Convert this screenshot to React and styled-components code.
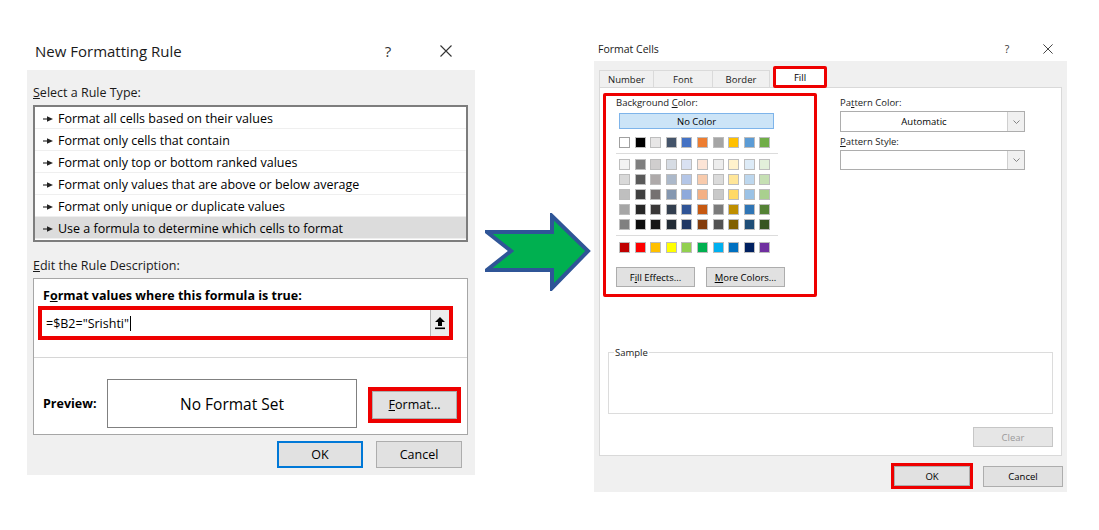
import React from "react";
import styled, { createGlobalStyle } from "styled-components";

const GlobalStyle = createGlobalStyle`
  body {
    margin: 0;
    background: #fff;
    font-family: "Open Sans", "Noto Sans", sans-serif;
    color: #000;
  }
`;

const Page = styled.div`
  display: flex;
  align-items: flex-start;
  width: 1099px;
  height: 530px;
  padding-left: 27px;
  box-sizing: border-box;
  overflow: hidden;
`;

const Dialog = styled.div`
  flex-shrink: 0;
  width: ${(p) => p.$w}px;
  margin-top: ${(p) => p.$top}px;
  margin-left: ${(p) => p.$left || 0}px;
  background: #fff;
`;

const TitleBar = styled.div`
  display: flex;
  align-items: center;
  height: ${(p) => p.$h}px;
  padding-left: ${(p) => p.$pad}px;
  padding-right: ${(p) => p.$padRight}px;
  font-size: ${(p) => p.$size}px;
  color: #1a1a1a;
`;

const TitleText = styled.span`
  flex: 1;
`;

const TitleControl = styled.span`
  display: flex;
  align-items: center;
  justify-content: center;
  width: ${(p) => p.$w}px;
  margin-left: ${(p) => p.$gap || 0}px;
  color: #333;
`;

const Body = styled.div`
  background: #f0f0f0;
  padding: ${(p) => p.$pad};
`;

const SectionLabel = styled.div`
  font-size: 12.5px;
  line-height: 16px;
  margin-top: ${(p) => p.$mt || 0}px;
  margin-bottom: ${(p) => p.$mb || 0}px;
  padding-top: 1px;
  color: #1a1a1a;
`;

const RuleList = styled.div`
  height: 137px;
  box-sizing: border-box;
  border: 2px solid #7d7d7d;
  background: #fff;
`;

const RuleItem = styled.div`
  display: flex;
  align-items: center;
  gap: 5px;
  height: 22px;
  box-sizing: border-box;
  padding: 2px 0 0 8px;
  font-size: 12.5px;
  border-bottom: 1px solid #efefef;
  background: ${(p) => (p.$selected ? "#dcdcdc" : "#fff")};
`;

const DescBox = styled.div`
  height: 157px;
  box-sizing: border-box;
  border: 1px solid #a6a6a6;
  background: #fff;
`;

const BoldLabel = styled.div`
  font-size: 12.5px;
  font-weight: 700;
  line-height: 16px;
  padding-left: ${(p) => p.$pl || 0}px;
  padding-top: ${(p) => p.$pt || 0}px;
  width: ${(p) => (p.$w ? `${p.$w}px` : "auto")};
  flex-shrink: 0;
`;

const Highlight = styled.div`
  display: flex;
  align-items: stretch;
  flex-shrink: 0;
  box-sizing: border-box;
  width: ${(p) => p.$w}px;
  height: ${(p) => p.$h}px;
  border: ${(p) => p.$bw}px solid #ee0000;
  margin: ${(p) => p.$m || 0};
  background: #fff;
  position: relative;
  z-index: 1;
`;

const FormulaInput = styled.div`
  flex: 1;
  display: flex;
  align-items: center;
  padding-left: 4px;
  font-size: 12.5px;
  background: #fff;
`;

const Caret = styled.span`
  display: inline-block;
  width: 1px;
  height: 15px;
  margin-left: 1px;
  background: #000;
`;

const RefButton = styled.div`
  width: 18px;
  display: flex;
  align-items: center;
  justify-content: center;
  background: #ececec;
  border-left: 1px solid #b5b5b5;
`;

const Divider = styled.div`
  height: 1px;
  margin-top: 17px;
  background: #d6d6d6;
`;

const PreviewRow = styled.div`
  display: flex;
  align-items: center;
  margin-top: 21px;
  padding-left: 9px;
`;

const PreviewBox = styled.div`
  width: 250px;
  height: 49px;
  box-sizing: border-box;
  border: 1px solid #808080;
  display: flex;
  align-items: center;
  justify-content: center;
  font-size: 15.5px;
`;

const Button = styled.div`
  flex-shrink: 0;
  display: flex;
  align-items: center;
  justify-content: center;
  box-sizing: border-box;
  width: ${(p) => (p.$w ? `${p.$w}px` : "100%")};
  height: ${(p) => (p.$h ? `${p.$h}px` : "100%")};
  margin-left: ${(p) => p.$ml || 0}px;
  font-size: ${(p) => p.$size}px;
  background: ${(p) => (p.$disabled ? "#e6e6e6" : "#e1e1e1")};
  color: ${(p) => (p.$disabled ? "#9a9a9a" : "#000")};
  border: ${(p) =>
    p.$primary ? "2px solid #0078d7" : p.$disabled ? "1px solid #c6c6c6" : "1px solid #adadad"};
  flex: ${(p) => (p.$fill ? 1 : "none")};
`;

const Footer = styled.div`
  display: flex;
  justify-content: flex-end;
  align-items: center;
  margin-top: ${(p) => p.$mt}px;
  margin-right: ${(p) => p.$mr}px;
  gap: ${(p) => p.$gap}px;
`;

const ArrowWrap = styled.div`
  flex-shrink: 0;
  margin-left: 10px;
  margin-top: 213px;
  width: 106px;
  height: 78px;
`;

/* Format Cells */

const TabStrip = styled.div`
  display: flex;
  align-items: flex-end;
  height: 17px;
`;

const Tab = styled.div`
  display: flex;
  align-items: center;
  justify-content: center;
  box-sizing: border-box;
  width: ${(p) => p.$w}px;
  height: 17px;
  font-size: 9.5px;
  color: #1a1a1a;
  border: 1px solid #dadada;
  border-bottom: none;
  border-left: ${(p) => (p.$first ? "1px solid #dadada" : "none")};
  background: #f0f0f0;
`;

const ActiveTab = styled.div`
  position: relative;
  z-index: 2;
  display: flex;
  align-items: center;
  justify-content: center;
  box-sizing: border-box;
  width: 54px;
  height: 22px;
  margin-left: 3px;
  margin-bottom: -1px;
  border: 3.5px solid #ee0000;
  border-radius: 2px;
  background: #fff;
  font-size: 9.5px;
`;

const TabPanel = styled.div`
  display: flex;
  flex-direction: column;
  box-sizing: border-box;
  height: 369px;
  border: 1px solid #d9d9d9;
  background: #fff;
  padding: 5px 8px 8px 8px;
`;

const TopRow = styled.div`
  display: flex;
  align-items: flex-start;
`;

const ColorBox = styled.div`
  box-sizing: border-box;
  width: 214px;
  height: 204px;
  margin-left: -5px;
  border: 3px solid #ee0000;
  border-radius: 2px;
  padding: 0 0 7px 10px;
  display: flex;
  flex-direction: column;
`;

const SmallLabel = styled.div`
  font-size: 9.5px;
  line-height: 13px;
  color: #1a1a1a;
  margin-top: ${(p) => p.$mt || 0}px;
`;

const NoColor = styled.div`
  box-sizing: border-box;
  width: 155px;
  height: 16px;
  margin: 4px 0 0 3px;
  display: flex;
  align-items: center;
  justify-content: center;
  font-size: 9.5px;
  background: #cce4f7;
  border: 1px solid #7eb4ea;
`;

const SwatchGrid = styled.div`
  display: grid;
  grid-template-columns: repeat(10, 11px);
  column-gap: 4.6px;
  row-gap: 4px;
  margin-left: 3px;
  margin-top: ${(p) => p.$mt || 0}px;
`;

const Swatch = styled.div`
  width: 11px;
  height: 11px;
  box-sizing: border-box;
  background: ${(p) => p.$c};
  border: 1px solid ${(p) => (p.$c === "#FFFFFF" ? "#a0a0a0" : "#bdbdbd")};
`;

const Separator = styled.div`
  width: 162px;
  height: 1px;
  background: #dcdcdc;
  margin: 5px 0 ${(p) => p.$mb}px 0;
`;

const ButtonRow = styled.div`
  display: flex;
  margin-top: 14px;
`;

const PatternCol = styled.div`
  margin-left: 23px;
  margin-top: 3px;
  display: flex;
  flex-direction: column;
`;

const Select = styled.div`
  display: flex;
  box-sizing: border-box;
  width: 185px;
  height: ${(p) => p.$h}px;
  margin-top: ${(p) => p.$mt}px;
  border: 1px solid #adadad;
  background: #fff;
`;

const SelectValue = styled.div`
  flex: 1;
  display: flex;
  align-items: center;
  justify-content: center;
  font-size: 9.5px;
`;

const SelectArrow = styled.div`
  width: 16px;
  display: flex;
  align-items: center;
  justify-content: center;
  background: #f0f0f0;
  border-left: 1px solid #cfcfcf;
`;

const SampleGroup = styled.fieldset`
  box-sizing: border-box;
  margin: 48.5px 0 0 0;
  padding: 0;
  height: 68.5px;
  border: 1px solid #dcdcdc;
  min-width: 0;

  legend {
    margin-left: 5px;
    padding: 0 1px;
    font-size: 9.5px;
    line-height: 13px;
    color: #1a1a1a;
  }
`;

const ClearRow = styled.div`
  display: flex;
  justify-content: flex-end;
  margin-top: 13px;
`;

const CloseIcon = ({ size }) => (
  <svg width={size} height={size} viewBox="0 0 12 12">
    <path d="M0.5 0.5 L11.5 11.5 M11.5 0.5 L0.5 11.5" stroke="#333" strokeWidth="1.1" fill="none" />
  </svg>
);

const RuleArrow = () => (
  <svg width="10" height="6" viewBox="0 0 10 6">
    <path d="M0 3 H5" stroke="#222" strokeWidth="1.1" />
    <polygon points="4,0.3 10,3 4,5.7" fill="#222" />
  </svg>
);

const UploadIcon = () => (
  <svg width="10" height="13" viewBox="0 0 10 13">
    <polygon points="5,0 10,5 7,5 7,9 3,9 3,5 0,5" fill="#000" />
    <rect x="0" y="10.5" width="10" height="1.6" fill="#000" />
  </svg>
);

const Chevron = () => (
  <svg width="7" height="4" viewBox="0 0 7 4">
    <path d="M0.5 0.5 L3.5 3.5 L6.5 0.5" stroke="#777" strokeWidth="0.9" fill="none" />
  </svg>
);

const BigArrow = () => (
  <svg width="106" height="78" viewBox="0 0 106 78">
    <polygon
      points="2,19 67,19 67,3 103,38 67,75 67,57 2,57 26,38"
      fill="#00b050"
      stroke="#2f5597"
      strokeWidth="4"
      strokeLinejoin="miter"
    />
  </svg>
);

const rules = [
  "Format all cells based on their values",
  "Format only cells that contain",
  "Format only top or bottom ranked values",
  "Format only values that are above or below average",
  "Format only unique or duplicate values",
  "Use a formula to determine which cells to format",
];

const themeRow = ["#FFFFFF", "#000000", "#E7E6E6", "#44546A", "#4472C4", "#ED7D31", "#A5A5A5", "#FFC000", "#5B9BD5", "#70AD47"];

const tintRows = [
  ["#F2F2F2", "#7F7F7F", "#D0CECE", "#D6DCE4", "#D9E1F2", "#FCE4D6", "#EDEDED", "#FFF2CC", "#DDEBF7", "#E2EFDA"],
  ["#D9D9D9", "#595959", "#AEAAAA", "#ACB9CA", "#B4C6E7", "#F8CBAD", "#DBDBDB", "#FFE699", "#BDD7EE", "#C6E0B4"],
  ["#BFBFBF", "#404040", "#757171", "#8497B0", "#8EA9DB", "#F4B084", "#C9C9C9", "#FFD966", "#9BC2E6", "#A9D08E"],
  ["#A6A6A6", "#262626", "#3A3838", "#333F4F", "#305496", "#C65911", "#7B7B7B", "#BF8F00", "#2F75B5", "#548235"],
  ["#808080", "#0D0D0D", "#171616", "#222B35", "#203764", "#833C0C", "#525252", "#806000", "#1F4E78", "#375623"],
];

const standardRow = ["#C00000", "#FF0000", "#FFC000", "#FFFF00", "#92D050", "#00B050", "#00B0F0", "#0070C0", "#002060", "#7030A0"];

function NewFormattingRule() {
  return (
    <Dialog $w={448} $top={32}>
      <TitleBar $h={38} $pad={8} $padRight={17} $size={15}>
        <TitleText>New Formatting Rule</TitleText>
        <TitleControl $w={24}>?</TitleControl>
        <TitleControl $w={24} $gap={34}>
          <CloseIcon size={12} />
        </TitleControl>
      </TitleBar>
      <Body $pad="14px 7px 7px 6px">
        <SectionLabel $mb={4}>
          <u>S</u>elect a Rule Type:
        </SectionLabel>
        <RuleList>
          {rules.map((r, i) => (
            <RuleItem key={i} $selected={i === rules.length - 1}>
              <RuleArrow />
              {r}
            </RuleItem>
          ))}
        </RuleList>
        <SectionLabel $mt={15} $mb={4}>
          <u>E</u>dit the Rule Description:
        </SectionLabel>
        <DescBox>
          <BoldLabel $pl={9} $pt={9}>
            F<u>o</u>rmat values where this formula is true:
          </BoldLabel>
          <Highlight $w={415} $h={34} $bw={4} $m="2px 0 0 4px">
            <FormulaInput>
              =$B2="Srishti"
              <Caret />
            </FormulaInput>
            <RefButton>
              <UploadIcon />
            </RefButton>
          </Highlight>
          <Divider />
          <PreviewRow>
            <BoldLabel $w={64}>Preview:</BoldLabel>
            <PreviewBox>No Format Set</PreviewBox>
            <Highlight $w={93} $h={36} $bw={4} $m="2px 0 0 11px">
              <Button $fill $size={12.5}>
                <span>
                  <u>F</u>ormat...
                </span>
              </Button>
            </Highlight>
          </PreviewRow>
        </DescBox>
        <Footer $mt={6} $mr={6} $gap={13}>
          <Button $w={86} $h={27} $size={12.5} $primary>
            OK
          </Button>
          <Button $w={86} $h={27} $size={12.5}>
            Cancel
          </Button>
        </Footer>
      </Body>
    </Dialog>
  );
}

function FormatCells() {
  return (
    <Dialog $w={473} $top={36} $left={3}>
      <TitleBar $h={25} $pad={4} $padRight={11} $size={10.5}>
        <TitleText>Format Cells</TitleText>
        <TitleControl $w={16}>?</TitleControl>
        <TitleControl $w={16} $gap={25}>
          <CloseIcon size={10} />
        </TitleControl>
      </TitleBar>
      <Body $pad="9px 5px 3px 5px">
        <TabStrip>
          <Tab $w={55} $first>
            Number
          </Tab>
          <Tab $w={59}>Font</Tab>
          <Tab $w={57}>Border</Tab>
          <ActiveTab>Fill</ActiveTab>
        </TabStrip>
        <TabPanel>
          <TopRow>
            <ColorBox>
              <SmallLabel>
                Background <u>C</u>olor:
              </SmallLabel>
              <NoColor>No Color</NoColor>
              <SwatchGrid $mt={8}>
                {themeRow.map((c) => (
                  <Swatch key={c} $c={c} />
                ))}
              </SwatchGrid>
              <Separator $mb={5} />
              <SwatchGrid>
                {tintRows.flat().map((c, i) => (
                  <Swatch key={i} $c={c} />
                ))}
              </SwatchGrid>
              <Separator $mb={6} />
              <SwatchGrid>
                {standardRow.map((c, i) => (
                  <Swatch key={i} $c={c} />
                ))}
              </SwatchGrid>
              <ButtonRow>
                <Button $w={79} $h={20} $size={9.5}>
                  <span>
                    F<u>i</u>ll Effects...
                  </span>
                </Button>
                <Button $w={79} $h={20} $size={9.5} $ml={11}>
                  <span>
                    <u>M</u>ore Colors...
                  </span>
                </Button>
              </ButtonRow>
            </ColorBox>
            <PatternCol>
              <SmallLabel>
                Pa<u>t</u>tern Color:
              </SmallLabel>
              <Select $h={21} $mt={2}>
                <SelectValue>Automatic</SelectValue>
                <SelectArrow>
                  <Chevron />
                </SelectArrow>
              </Select>
              <SmallLabel $mt={2.5}>
                <u>P</u>attern Style:
              </SmallLabel>
              <Select $h={20} $mt={2.5}>
                <SelectValue />
                <SelectArrow>
                  <Chevron />
                </SelectArrow>
              </Select>
            </PatternCol>
          </TopRow>
          <SampleGroup>
            <legend>Sample</legend>
          </SampleGroup>
          <ClearRow>
            <Button $w={80} $h={20} $size={9.5} $disabled>
              Clear
            </Button>
          </ClearRow>
        </TabPanel>
        <Footer $mt={7} $mr={-1} $gap={10}>
          <Highlight $w={82} $h={26} $bw={3.5}>
            <Button $fill $size={9.5}>
              OK
            </Button>
          </Highlight>
          <Button $w={80} $h={21} $size={9.5}>
            Cancel
          </Button>
        </Footer>
      </Body>
    </Dialog>
  );
}

export default function App() {
  return (
    <>
      <GlobalStyle />
      <Page>
        <NewFormattingRule />
        <ArrowWrap>
          <BigArrow />
        </ArrowWrap>
        <FormatCells />
      </Page>
    </>
  );
}
